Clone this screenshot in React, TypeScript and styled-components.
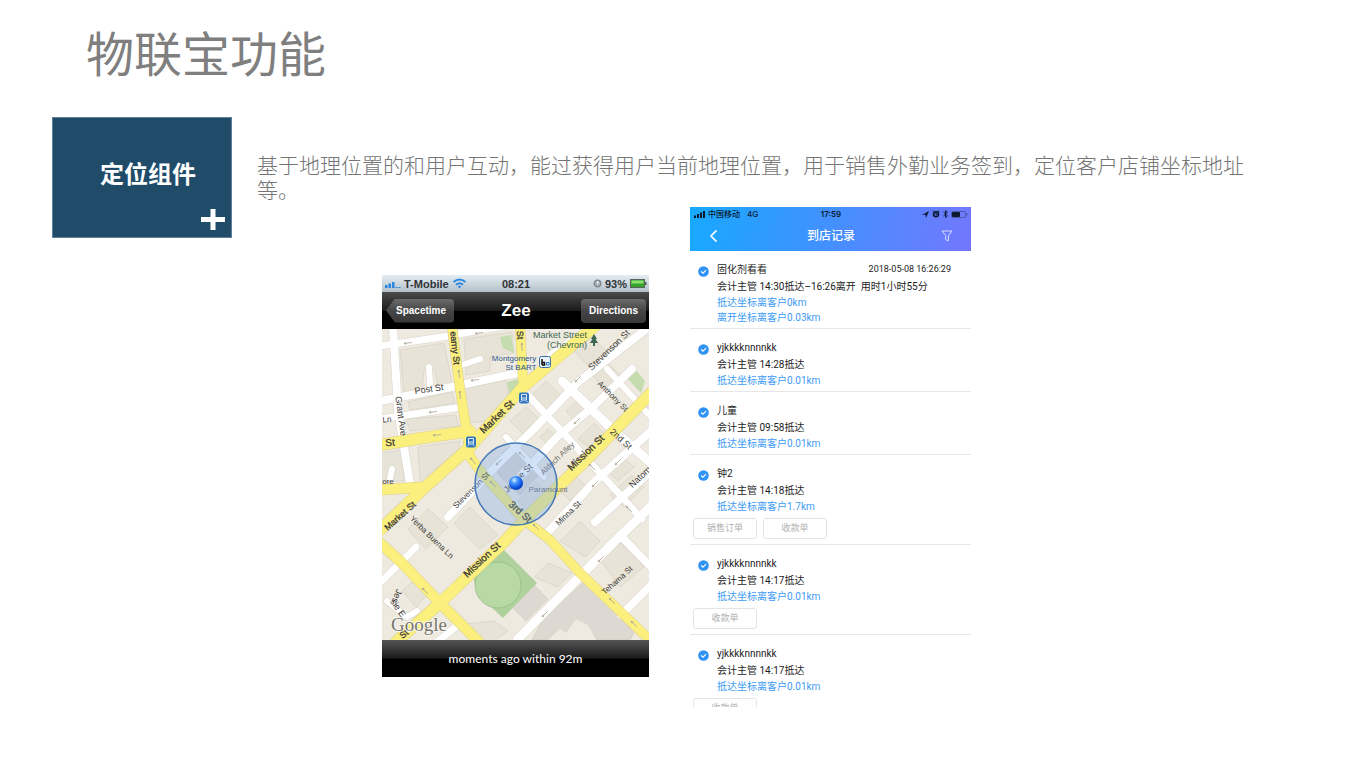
import React from 'react';
import styled, { createGlobalStyle } from 'styled-components';

const GlobalStyle = createGlobalStyle`
  * { box-sizing: border-box; }
  body {
    margin: 0;
    background: #fff;
    font-family: "Noto Sans", "Noto Sans CJK SC", sans-serif;
  }
  button { font: inherit; cursor: pointer; }
  svg { display: block; flex: none; }
`;

const Page = styled.main`
  padding: 18px 0 52px;
`;

const Title = styled.h1`
  margin: 0 0 27px;
  padding-left: 86px;
  font-size: 48px;
  line-height: 72px;
  font-weight: 400;
  color: #7f7f7f;
`;

const Intro = styled.section`
  display: flex;
  gap: 25px;
  padding: 0 88px 0 52px;
`;

const Tile = styled.div`
  flex: none;
  display: flex;
  flex-direction: column;
  justify-content: flex-end;
  width: 180px;
  height: 121px;
  padding: 0 6px 5px;
  background: #204c6a;
  border: 1px solid #5f8098;
  color: #fff;
`;

const TileName = styled.h2`
  margin: 0 0 16px;
  padding-left: 41px;
  font-size: 24px;
  line-height: 36px;
  font-weight: 700;
`;

const PlusIcon = styled.svg`
  align-self: flex-end;
`;

const Description = styled.p`
  flex: 1;
  margin: 36px 0 0;
  font-size: 21px;
  line-height: 25px;
  font-weight: 300;
  color: #757575;
`;

const Shots = styled.section`
  display: flex;
  justify-content: center;
  align-items: flex-start;
  gap: 41px;
  margin-top: -31px;
  padding-left: 3px;
`;

/* ---------- map phone ---------- */

const MapPhone = styled.article`
  width: 267px;
  margin-top: 68px;
  background: #000;
  font-family: "Liberation Sans", Arial, sans-serif;
`;

const MapStatus = styled.div`
  display: grid;
  grid-template-columns: 1fr auto 1fr;
  align-items: center;
  height: 17px;
  padding: 0 2px 0 3px;
  background: linear-gradient(#e4edf2, #b4c0c9);
  color: #303438;
  font-size: 11px;
  font-weight: 700;
`;

const StatusGroup = styled.span<{ $end?: boolean }>`
  display: flex;
  align-items: center;
  justify-content: ${(p) => (p.$end ? 'flex-end' : 'flex-start')};
  gap: 3px;
  white-space: nowrap;
`;

const MapNav = styled.div`
  display: grid;
  grid-template-columns: 1fr auto 1fr;
  align-items: center;
  height: 37px;
  padding: 0 3px 0 4px;
  background: linear-gradient(#4b4b4b, #1b1b1b 50%, #000 52%, #000);
`;

const MapTitle = styled.h3`
  margin: 0;
  color: #fff;
  font-size: 17px;
  line-height: 20px;
`;

const NavButton = styled.button<{ $back?: boolean }>`
  justify-self: ${(p) => (p.$back ? 'start' : 'end')};
  height: 24px;
  padding: ${(p) => (p.$back ? '0 8px 0 10px' : '0 8px')};
  border: 0;
  border-radius: 4px;
  background: linear-gradient(#6b6b6b, #454545 50%, #383838);
  clip-path: ${(p) => (p.$back ? 'polygon(0 50%, 9px 0, 100% 0, 100% 100%, 9px 100%)' : 'none')};
  color: #fff;
  font-size: 10px;
  font-weight: 700;
`;

const MapFooter = styled.p`
  margin: 0;
  height: 37px;
  background: linear-gradient(#555, #1c1c1c 48%, #000 52%, #000);
  color: #f2f2f2;
  font-family: Lato, sans-serif;
  font-size: 12px;
  font-weight: 500;
  line-height: 37px;
  text-align: center;
`;

const MapDrawing = styled.svg`
  width: 100%;
  height: auto;
`;

const whiteRoads: [string, number][] = [
  ['M11 -2 L16 81 L28 155', 8],
  ['M-2 17 L60 8 L122 -3', 7],
  ['M-2 72 L60 60 L136 44', 8],
  ['M-2 90 L80 78', 7],
  ['M48 56 L47 38 M80 36 L98 30', 6],
  ['M267 -2 L195 54 L152 100 L118 133 L66 188', 8],
  ['M168 26 L211 -4', 6],
  ['M142 62 L185 108 L218 144 L260 190', 7],
  ['M180 52 L231 101 L269 134', 9],
  ['M124 108 L162 148', 6],
  ['M250 40 L211 78 L175 108 L130 156', 8],
  ['M269 102 L211 154 L166 203', 8],
  ['M269 142 L213 193', 8],
  ['M225 40 L269 88', 6],
  ['M269 177 L231 214 L135 311', 9],
  ['M269 256 L239 286', 8],
  ['M238 206 L269 238', 8],
  ['M-2 254 L34 218', 7],
  ['M5 272 L25 288 L35 282', 6],
  ['M76 296 L55 313', 7],
  ['M8 150 L10 140', 6],
];

const yellowRoads: [string, number][] = [
  ['M70 -2 L78 60 L85 104 L88 128 L100 144 L141 190 L168 211 L198 244 L269 312', 9],
  ['M138 -2 L141 52', 9],
  ['M214 -4 L141 58 L88 118 L41 160 L-2 201', 11],
  ['M-2 116 L40 109 L88 102', 11],
  ['M-2 161 L41 158', 10],
  ['M269 64 L205 130 L145 188 L121 214 L58 274 L14 313', 11],
  ['M-4 212 L20 234 L58 274 L97 313', 10],
];

const blocks = [
  'M18 21 L62 14 L70 54 L56 57 L53 42 L42 42 L40 60 L22 64 Z',
  'M82 10 L130 3 L132 24 L108 28 L108 42 L84 46 Z',
  'M82 60 L124 51 L126 72 L104 92 L86 94 Z',
  'M26 73 L70 63 L73 74 L28 81 Z',
  'M24 90 L74 86 L77 97 L28 102 Z',
  'M36 118 L78 112 L76 122 L38 152 Z',
  'M-2 124 L20 121 L22 152 L-2 153 Z',
  'M150 66 L164 52 L178 66 L163 82 Z',
  'M192 22 L210 8 L224 22 L207 38 Z',
  'M212 48 L226 34 L240 48 L224 62 Z',
  'M184 82 L198 70 L210 82 L196 95 Z',
  'M158 108 L166 100 L176 110 L168 118 Z',
  'M128 92 L144 78 L160 92 L144 108 Z',
  'M196 110 L212 94 L225 107 L210 121 Z',
  'M222 139 L238 126 L252 138 L236 152 Z',
  'M228 166 L250 146 L262 158 L242 178 Z',
  'M176 160 L192 145 L204 157 L188 172 Z',
  'M178 212 L198 192 L218 212 L203 228 Z',
  'M46 180 L66 198 L44 220 L26 200 Z',
  'M72 194 L88 178 L116 206 L98 220 Z',
  'M20 262 L36 248 L48 262 L34 278 Z',
  'M136 172 L154 153 L165 164 L146 182 Z',
  'M218 230 L238 214 L262 238 L238 258 Z',
  'M152 248 L166 234 L190 244 L176 258 Z',
  'M84 295 L112 292 L126 302 L112 312 L92 312 Z',
];

type MapLabel = { t: string; x: number; y: number; r?: number; s?: number; c?: string; b?: boolean };

const labels: MapLabel[] = [
  { t: 'earny St', x: 73, y: 19, r: 84, s: 9, b: true },
  { t: 'St', x: 138, y: 6, r: 86, s: 9, b: true },
  { t: 'Market Street', x: 178, y: 6, s: 9, c: '#3d6653' },
  { t: '(Chevron)', x: 185, y: 16, s: 9, c: '#3d6653' },
  { t: 'Montgomery', x: 132, y: 29, s: 8, c: '#2d568c' },
  { t: 'St BART', x: 139, y: 38, s: 8, c: '#2d568c' },
  { t: 'Post St', x: 47, y: 60, r: -8, s: 9 },
  { t: 'Grant Ave', x: 19, y: 87, r: 82, s: 9 },
  { t: 'Market St', x: 115, y: 88, r: -44, s: 10, b: true },
  { t: 'Ln', x: 5, y: 90, r: -5, s: 8 },
  { t: 'St', x: 8, y: 114, r: -4, s: 10, b: true },
  { t: 'ore', x: 6, y: 152, s: 8 },
  { t: 'Market St', x: 18, y: 187, r: -42, s: 9, b: true },
  { t: 'Yerba Buena Ln', x: 50, y: 208, r: 44, s: 8 },
  { t: '3rd St', x: 138, y: 183, r: 42, s: 10, b: true },
  { t: 'Stevenson St', x: 89, y: 161, r: -45, s: 8 },
  { t: 'Stevenson St', x: 227, y: 21, r: -44, s: 9 },
  { t: 'Anthony St', x: 231, y: 67, r: 45, s: 8 },
  { t: '2nd St', x: 239, y: 110, r: 42, s: 9 },
  { t: 'Mission St', x: 204, y: 124, r: -44, s: 10, b: true },
  { t: 'Mission St', x: 100, y: 231, r: -43, s: 10, b: true },
  { t: 'Aldrich Alley', x: 175, y: 129, r: -44, s: 8, c: '#6b6b6b' },
  { t: 'Jessie St', x: 136, y: 149, r: -45, s: 9 },
  { t: 'Paramount', x: 166, y: 160, s: 8, c: '#6e6e7a' },
  { t: 'Minna St', x: 186, y: 184, r: -44, s: 8 },
  { t: 'Natom', x: 258, y: 148, r: -44, s: 9 },
  { t: 'Tehama St', x: 235, y: 251, r: -42, s: 8 },
  { t: 'Jes', x: 15, y: 267, r: 112, s: 9 },
  { t: 'sie E', x: 16, y: 279, r: 55, s: 9 },
  { t: 'St', x: 22, y: 305, r: -38, s: 9, b: true },
];

const arrows: [number, number, number][] = [
  [26, 14, -8], [97, 4, -8], [77, 45, 84], [93, 51, -8], [78, 66, 84],
  [140, 18, 86], [55, 106, -6], [51, 83, -6], [196, 50, -45], [195, 92, -45],
  [117, 133, -45], [140, 126, 45], [111, 155, 45], [236, 133, -45], [210, 138, 45],
  [213, 155, -45], [91, 132, 50], [43, 262, 45], [230, 272, 45], [252, 295, 45],
  [163, 285, -45], [219, 230, -45], [247, 180, 45], [154, 198, 45],
];

function StreetMap() {
  return (
    <MapDrawing viewBox="0 0 267 311" role="img" aria-label="Street map with the current location">
      <defs>
        <radialGradient id="pin" cx="0.38" cy="0.3" r="0.75">
          <stop offset="0" stopColor="#e3f2ff" />
          <stop offset="0.3" stopColor="#4a9cff" />
          <stop offset="0.75" stopColor="#0b4fe0" />
          <stop offset="1" stopColor="#0838a8" />
        </radialGradient>
      </defs>
      <rect width="267" height="311" fill="#eeeae0" />
      <g fill="#e8e3d7" stroke="#d9d3c9" strokeWidth="0.8">
        {blocks.map((d) => <path key={d} d={d} />)}
      </g>
      <g fill="#ddd8d1" stroke="#cfc9c1" strokeWidth="0.7">
        <path d="M160 292 L203 252 L252 304 L248 311 L150 311 Z" />
        <path d="M120 124 L132 114 L146 128 L160 142 L138 166 L116 145 Z" />
        <path d="M130 278 L152 256 L166 270 L144 292 Z" />
      </g>
      <path d="M166 311 L178 300 L184 304 L194 290 L206 296 L214 311 Z" fill="#eeeae2" />
      <g fill="#c4dcae">
        <path d="M118 8 L129 6 L132 24 L121 19 Z" />
        <path d="M125 53 L136 50 L137 65 L128 73 Z" />
        <path d="M241 45 L250 36 L263 52 L259 64 Z" />
        <path d="M188 18 L204 4 L208 8 L192 22 Z" />
      </g>
      <path d="M121 220 L155 254 L121 289 L96 266 L91 248 Z" fill="#afd19b" />
      <circle cx="116" cy="256" r="23" fill="#b9d9a4" stroke="#96bd87" strokeWidth="0.8" />
      <g fill="none" strokeLinejoin="round" strokeLinecap="round">
        {whiteRoads.map(([d, w]) => <path key={d} d={d} stroke="#d9d4cc" strokeWidth={w + 1} />)}
        {whiteRoads.map(([d, w]) => <path key={d} d={d} stroke="#ffffff" strokeWidth={w} />)}
        {yellowRoads.map(([d, w]) => <path key={d} d={d} stroke="#dccf86" strokeWidth={w + 1} />)}
        {yellowRoads.map(([d, w]) => <path key={d} d={d} stroke="#fbf07e" strokeWidth={w} />)}
      </g>
      <g stroke="#a9a493" strokeWidth="0.8" fill="none">
        {arrows.map(([x, y, r]) => (
          <path key={`${x}-${y}`} d="M-4 0 H4 M-4 0 L-2 -1 M-4 0 L-2 1" transform={`translate(${x} ${y}) rotate(${r})`} />
        ))}
      </g>
      {labels.map((l) => (
        <text
          key={`${l.t}-${l.x}-${l.y}`}
          transform={`translate(${l.x} ${l.y}) rotate(${l.r ?? 0})`}
          textAnchor="middle"
          dy="3"
          fontSize={l.s}
          fill={l.c ?? '#3c3a36'}
          stroke={l.b ? '#3c3a36' : 'none'}
          strokeWidth="0.3"
        >
          {l.t}
        </text>
      ))}
      <path d="M212 5 L215 10 H213.500 L216 14 H213 V17 H211 V14 H208 L210.500 10 H209 Z" fill="#3d6653" />
      <rect x="157.500" y="27.500" width="11" height="11" rx="2" fill="#e9f2fa" stroke="#3a6ea8" />
      <path d="M160 30 V36 M160 33.500 H162.500 V36 H160" stroke="#111" strokeWidth="1.500" fill="none" />
      <path d="M164.500 33.500 H167 V36 H164.500 Z" stroke="#2d7cc4" strokeWidth="1" fill="none" />
      {[[142, 69], [89, 113]].map(([x, y]) => (
        <g key={x} transform={`translate(${x} ${y})`}>
          <rect x="-5" y="-5.500" width="10" height="11" rx="2" fill="#3277bd" />
          <path d="M-2.500 -3.500 H2.500 V2 H-2.500 Z M-3.500 4 L-2 2.500 M3.500 4 L2 2.500 M-3 0 H3" stroke="#dceaf7" fill="none" />
        </g>
      ))}
      <circle cx="134" cy="155" r="41" fill="#6fa3e8" fillOpacity="0.32" stroke="#4579b5" strokeWidth="1.500" />
      <circle cx="134" cy="154" r="7" fill="url(#pin)" />
      <text
        x="37"
        y="302"
        textAnchor="middle"
        fontFamily="Liberation Serif, serif"
        fontSize="19"
        fill="#77756e"
        stroke="#f7f5ee"
        strokeWidth="2"
        paintOrder="stroke"
      >
        Google
      </text>
    </MapDrawing>
  );
}

/* ---------- visit records phone ---------- */

const RecordsPhone = styled.article`
  width: 281px;
  height: 500px;
  overflow: hidden;
  background: #fff;
  font-family: Inter, "Noto Sans CJK SC", sans-serif;
`;

const RecordsHeader = styled.header`
  height: 44px;
  background: linear-gradient(100deg, #17a9ff, #4390ff 50%, #7377fd);
`;

const RecordsStatus = styled.div`
  display: grid;
  grid-template-columns: 1fr auto 1fr;
  align-items: center;
  height: 14px;
  padding: 0 3px 0 4px;
  color: #0c1a30;
  font-size: 8px;
  line-height: 14px;
  font-weight: 500;
`;

const Network = styled.span`
  padding-left: 4px;
`;

const Clock = styled.span`
  font-weight: 600;
`;

const RecordsNav = styled.div`
  display: grid;
  grid-template-columns: 1fr auto 1fr;
  align-items: center;
  height: 30px;
  padding: 0 18px 0 19px;
  color: #fff;
`;

const RecordsTitle = styled.h3`
  margin: 0;
  font-size: 12px;
  line-height: 18px;
  font-weight: 500;
`;

const IconButton = styled.button<{ $end?: boolean }>`
  justify-self: ${(p) => (p.$end ? 'end' : 'start')};
  padding: 0;
  border: 0;
  background: none;
  color: inherit;
`;

const List = styled.ul`
  margin: 0;
  padding: 0;
  list-style: none;
  font-family: Roboto, "Noto Sans CJK SC", sans-serif;
`;

const Row = styled.li`
  padding: 10px 0 2px;
  border-bottom: 1px solid #e6e6e6;
`;

const RowBody = styled.div`
  display: grid;
  grid-template-columns: 11px 1fr auto;
  column-gap: 8px;
  padding: 0 20px 1px 8px;
  color: #1c1c1c;
`;

const CheckIcon = styled.svg`
  margin-top: 5px;
`;

const Name = styled.h4`
  margin: 0;
  font-size: 10px;
  line-height: 17px;
  font-weight: 400;
`;

const DateTime = styled.time`
  font-size: 9px;
  line-height: 17px;
`;

const Line = styled.p<{ $link?: boolean }>`
  grid-column: 2 / -1;
  margin: 0;
  font-size: 10px;
  line-height: ${(p) => (p.$link ? '15px' : '17px')};
  color: ${(p) => (p.$link ? '#3d9bf5' : 'inherit')};
  white-space: pre;
`;

const Actions = styled.div`
  display: flex;
  gap: 6px;
  margin: 3px 0;
  padding-left: 3px;
`;

const OrderButton = styled.button`
  width: 64px;
  height: 21px;
  padding: 0;
  border: 1px solid #e4e4e4;
  border-radius: 3px;
  background: #fff;
  color: #b0b0b0;
  font-size: 9px;
  line-height: 19px;
`;

type VisitRecord = { name: string; time?: string; visit: string; places: string[]; orders?: string[] };

const records: VisitRecord[] = [
  {
    name: '固化剂看看',
    time: '2018-05-08 16:26:29',
    visit: '会计主管 14:30抵达–16:26离开  用时1小时55分',
    places: ['抵达坐标离客户0km', '离开坐标离客户0.03km'],
  },
  { name: 'yjkkkknnnnkk', visit: '会计主管 14:28抵达', places: ['抵达坐标离客户0.01km'] },
  { name: '儿童', visit: '会计主管 09:58抵达', places: ['抵达坐标离客户0.01km'] },
  { name: '钟2', visit: '会计主管 14:18抵达', places: ['抵达坐标离客户1.7km'], orders: ['销售订单', '收款单'] },
  { name: 'yjkkkknnnnkk', visit: '会计主管 14:17抵达', places: ['抵达坐标离客户0.01km'], orders: ['收款单'] },
  { name: 'yjkkkknnnnkk', visit: '会计主管 14:17抵达', places: ['抵达坐标离客户0.01km'], orders: ['收款单'] },
];

function RecordRow({ record }: { record: VisitRecord }) {
  return (
    <Row>
      <RowBody>
        <CheckIcon width="11" height="11" viewBox="0 0 11 11" aria-hidden="true">
          <circle cx="5.500" cy="5.500" r="5.300" fill="#2f93f6" />
          <path d="M3.200 5.500 L5 7.200 L8 4.200" fill="none" stroke="#fff" strokeWidth="1.100" />
        </CheckIcon>
        <Name>{record.name}</Name>
        {record.time ? <DateTime>{record.time}</DateTime> : <span />}
        <Line>{record.visit}</Line>
        {record.places.map((place) => <Line key={place} $link>{place}</Line>)}
      </RowBody>
      {record.orders && (
        <Actions>
          {record.orders.map((order) => <OrderButton key={order} type="button">{order}</OrderButton>)}
        </Actions>
      )}
    </Row>
  );
}

export default function App() {
  return (
    <>
      <GlobalStyle />
      <Page>
        <Title>物联宝功能</Title>
        <Intro>
          <Tile>
            <TileName>定位组件</TileName>
            <PlusIcon width="24" height="24" viewBox="0 0 24 24" aria-hidden="true">
              <path d="M12 1 V22 M0 11.500 H24" stroke="#fff" strokeWidth="5" />
            </PlusIcon>
          </Tile>
          <Description>
            基于地理位置的和用户互动，能过获得用户当前地理位置，用于销售外勤业务签到，定位客户店铺坐标地址等。
          </Description>
        </Intro>
        <Shots>
          <MapPhone>
            <MapStatus>
              <StatusGroup>
                <svg width="16" height="9" viewBox="0 0 16 9" aria-hidden="true">
                  <path d="M0 6 H2.500 V9 H0 Z M3.500 4.500 H6 V9 H3.500 Z M7 3 H9.500 V9 H7 Z M10.500 8 H12.500 V9 H10.500 Z M13.500 8 H15.500 V9 H13.500 Z" fill="#2a86e0" />
                </svg>
                <span>T-Mobile</span>
                <svg width="15" height="11" viewBox="0 0 15 11" aria-hidden="true">
                  <path d="M1.500 4 Q7.500 -1 13.500 4 M4 6.700 Q7.500 3.800 11 6.700" fill="none" stroke="#2a86e0" strokeWidth="1.900" />
                  <path d="M5.800 8.500 Q7.500 7.200 9.200 8.500 L7.500 10.500 Z" fill="#2a86e0" />
                </svg>
              </StatusGroup>
              <span>08:21</span>
              <StatusGroup $end>
                <svg width="9" height="9" viewBox="0 0 9 9" aria-hidden="true">
                  <circle cx="4.500" cy="4.500" r="3.300" fill="#aab3b9" stroke="#7d868c" strokeWidth="1.300" />
                  <path d="M4.500 4.500 V2 M4.500 4.500 L6 3.500" stroke="#eef2f4" />
                </svg>
                <span>93%</span>
                <svg width="17" height="9" viewBox="0 0 17 9" aria-hidden="true">
                  <rect x="0.500" y="0.500" width="14" height="8" fill="#35a32c" stroke="#59635b" />
                  <rect x="1.500" y="1.500" width="12" height="3" fill="#8be070" />
                  <rect x="15" y="3" width="1.500" height="3" fill="#59635b" />
                </svg>
              </StatusGroup>
            </MapStatus>
            <MapNav>
              <NavButton type="button" $back>Spacetime</NavButton>
              <MapTitle>Zee</MapTitle>
              <NavButton type="button">Directions</NavButton>
            </MapNav>
            <StreetMap />
            <MapFooter>moments ago within 92m</MapFooter>
          </MapPhone>

          <RecordsPhone>
            <RecordsHeader>
              <RecordsStatus>
                <StatusGroup>
                  <svg width="11" height="7" viewBox="0 0 11 7" aria-hidden="true">
                    <path d="M0 4.500 H2 V7 H0 Z M3 3 H5 V7 H3 Z M6 1.500 H8 V7 H6 Z M9 0 H11 V7 H9 Z" fill="#0c1a30" />
                  </svg>
                  <span>中国移动</span>
                  <Network>4G</Network>
                </StatusGroup>
                <Clock>17:59</Clock>
                <StatusGroup $end>
                  <svg width="7" height="7" viewBox="0 0 7 7" aria-hidden="true">
                    <path d="M0 4 L7 0 L4 7 L3.500 3.800 Z" fill="#0c1a30" />
                  </svg>
                  <svg width="8" height="8" viewBox="0 0 8 8" aria-hidden="true">
                    <circle cx="4" cy="4.300" r="2.400" fill="none" stroke="#0c1a30" strokeWidth="1.700" />
                    <path d="M0.500 2 L2 0.500 M7.500 2 L6 0.500 M4 3 V4.500 H5" stroke="#0c1a30" fill="none" />
                  </svg>
                  <svg width="5" height="8" viewBox="0 0 5 8" aria-hidden="true">
                    <path d="M0.500 2 L4.500 5.800 L2.500 7.500 V0.500 L4.500 2.200 L0.500 6" fill="none" stroke="#0c1a30" strokeWidth="0.900" />
                  </svg>
                  <svg width="17" height="7" viewBox="0 0 17 7" aria-hidden="true">
                    <rect x="0.500" y="0.500" width="14" height="6" rx="1.500" fill="none" stroke="#3f4d86" strokeWidth="0.700" />
                    <rect x="1" y="1" width="8" height="5" rx="1" fill="#0c1a30" />
                    <path d="M16 2.500 V4.500" stroke="#3f4d86" />
                  </svg>
                </StatusGroup>
              </RecordsStatus>
              <RecordsNav>
                <IconButton type="button" aria-label="返回">
                  <svg width="9" height="12" viewBox="0 0 9 12" aria-hidden="true">
                    <path d="M7.500 0.500 L2 6 L7.500 11.500" fill="none" stroke="#fff" strokeWidth="1.700" />
                  </svg>
                </IconButton>
                <RecordsTitle>到店记录</RecordsTitle>
                <IconButton type="button" aria-label="筛选" $end>
                  <svg width="12" height="12" viewBox="0 0 12 12" aria-hidden="true">
                    <path d="M1 1 H11 L7.500 5.500 V10.500 M1 1 L4.700 5.500 V9.500 L7.500 11" fill="none" stroke="#e4e6ff" strokeWidth="0.900" />
                  </svg>
                </IconButton>
              </RecordsNav>
            </RecordsHeader>
            <List>
              {records.map((record, i) => <RecordRow key={i} record={record} />)}
            </List>
          </RecordsPhone>
        </Shots>
      </Page>
    </>
  );
}
